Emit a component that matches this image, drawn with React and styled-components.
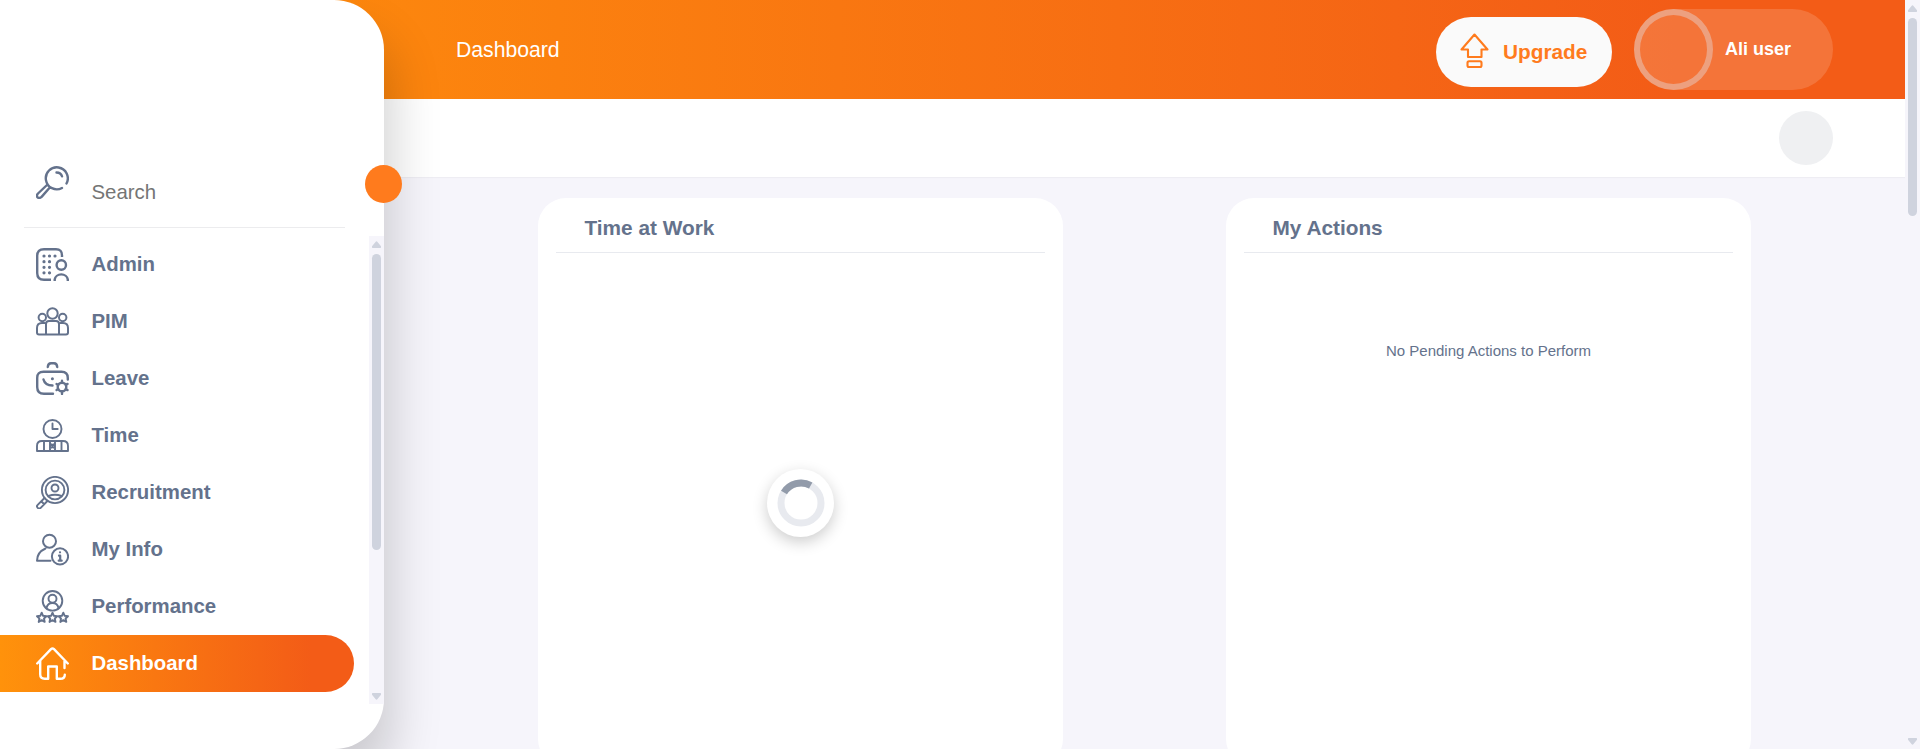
import React from 'react';
import styled, { createGlobalStyle } from 'styled-components';

const slate = '#64728c';
const orange = '#ff7b1d';
const brandGradient = 'linear-gradient(90deg, #ff920b, #f35c17 88%)';

const GlobalStyle = createGlobalStyle`
  * { box-sizing: border-box; }
  body { margin: 0; font-family: 'Liberation Sans', Arial, sans-serif; overflow: hidden; }
`;

const Page = styled.div`
  display: flex;
  height: 749px;
  overflow: hidden;
  background: #f6f5fb;
`;

const Sidebar = styled.aside`
  position: relative;
  z-index: 2;
  display: flex;
  flex-direction: column;
  flex: none;
  width: 384px;
  height: 749px;
  padding-top: 166px;
  background: #fff;
  border-radius: 0 50px 50px 0;
  box-shadow: 8px 34px 50px rgba(0, 0, 0, 0.18);
`;

const Toggle = styled.button`
  position: absolute;
  top: 165px;
  right: -18px;
  width: 37px;
  height: 38px;
  padding: 0;
  border: 0;
  border-radius: 50%;
  background: ${orange};
`;

const SearchRow = styled.label`
  display: flex;
  gap: 22.5px;
  flex: none;
  height: 62px;
  width: 321px;
  margin-left: 24px;
  padding-left: 12px;
  border-bottom: 1px solid #ececee;
  color: ${slate};
`;

const SearchText = styled.span`
  margin-top: 14px;
  font-size: 20.4px;
  line-height: 24px;
  color: #757575;
`;

const MenuArea = styled.div`
  display: flex;
  justify-content: space-between;
  margin-top: 8px;
  height: 468px;
`;

const Menu = styled.nav`
  width: 354px;
`;

const MenuItem = styled.a`
  display: flex;
  align-items: center;
  gap: 22.5px;
  height: 57px;
  padding: 0 0 0 36px;
  border-radius: 0 28.5px 28.5px 0;
  background: ${(p) => (p.$active ? brandGradient : 'transparent')};
  color: ${(p) => (p.$active ? '#fff' : slate)};
  font-size: 20.4px;
  line-height: 24px;
  font-weight: 700;
`;

const MenuLabel = styled.span`
  margin-top: -2px;
`;

const Icon = styled.svg`
  flex: none;
  width: 33px;
  height: 33px;
  fill: none;
  stroke: currentColor;
  stroke-width: ${(p) => p.$weight || 2.4};
  stroke-linecap: round;
  stroke-linejoin: round;
`;

const Track = styled.div`
  display: flex;
  flex-direction: column;
  align-items: center;
  flex: none;
  width: 15px;
  height: 100%;
  padding: 5px 0 4px;
  background: #f6f5fb;
`;

const Thumb = styled.div`
  width: 9px;
  height: ${(p) => p.$height}px;
  margin-top: 6px;
  margin-bottom: auto;
  border-radius: 5px;
  background: #cfd3de;
`;

const Arrow = styled.svg`
  display: block;
  width: 9px;
  height: 7px;
  fill: #cfd3de;
  transform: ${(p) => (p.$down ? 'rotate(180deg)' : 'none')};
`;

const Main = styled.main`
  flex: 1;
  min-width: 0;
`;

const TopBar = styled.header`
  display: flex;
  align-items: flex-start;
  height: 99px;
  margin-left: -384px;
  padding-left: 456px;
  padding-right: 72px;
  background: ${brandGradient};
  color: #fff;
`;

const PageTitle = styled.h1`
  margin: 38px auto 0 0;
  font-size: 21.2px;
  line-height: 24px;
  font-weight: 400;
`;

const Upgrade = styled.button`
  display: flex;
  align-items: center;
  gap: 13px;
  width: 176px;
  height: 70px;
  margin: 17px 22px 0 0;
  padding: 0 0 0 24px;
  border: 0;
  border-radius: 35px;
  background: #fafafa;
  color: ${orange};
  font: 700 20.8px/24px 'Liberation Sans', Arial, sans-serif;
`;

const UpgradeIcon = styled(Icon)`
  width: 30px;
  height: 36px;
  margin-top: -2px;
`;

const UserPill = styled.div`
  display: flex;
  align-items: center;
  gap: 12px;
  width: 199px;
  height: 81px;
  margin-top: 9px;
  border-radius: 40.5px;
  background: rgba(255, 255, 255, 0.15);
  font-size: 18px;
  line-height: 22px;
  font-weight: 700;
`;

const Avatar = styled.span`
  width: 79px;
  height: 81px;
  border: 6px solid rgba(228, 228, 232, 0.4);
  border-radius: 50%;
`;

const UserName = styled.span`
  margin-top: -2px;
`;

const SubBar = styled.div`
  display: flex;
  justify-content: flex-end;
  align-items: center;
  height: 78px;
  padding-right: 72px;
  background: #fff;
  box-shadow: 0 1px 1px rgba(0, 0, 0, 0.03);
`;

const HelpButton = styled.span`
  width: 54px;
  height: 54px;
  border-radius: 50%;
  background: #eff0f2;
`;

const Cards = styled.section`
  display: flex;
  gap: 163px;
  padding: 21px 0 0 154px;
`;

const Card = styled.article`
  flex: none;
  width: 525px;
  height: 569px;
  padding: 0 18px;
  border-radius: 28px;
  background: #fff;
`;

const CardTitle = styled.h2`
  height: 55px;
  margin: 0;
  padding: 18px 0 0 28.5px;
  border-bottom: 1px solid #e8eaef;
  color: ${slate};
  font-size: 20.8px;
  line-height: 24px;
  font-weight: 700;
`;

const Spinner = styled.div`
  display: grid;
  place-items: center;
  width: 67px;
  height: 68px;
  margin: 216px auto 0;
  border-radius: 50%;
  background: #fff;
  box-shadow: 0 5px 15px rgba(0, 0, 0, 0.2);
`;

const SpinnerRing = styled.svg`
  width: 48px;
  height: 48px;
  fill: none;
  stroke-width: 7;
`;

const Empty = styled.p`
  margin: 89px 0 0;
  text-align: center;
  color: ${slate};
  font-size: 15px;
  line-height: 18px;
`;

const Star = ({ x }) => (
  <path
    d="M0-4.7 1.4-1.6 4.7-1.2 2.3 1.1 3 4.5 0 2.8-3 4.5-2.3 1.1-4.7-1.2-1.4-1.6Z"
    transform={`translate(${x} 27.4)`}
  />
);

const items = [
  {
    label: 'Admin',
    art: (
      <>
        <path strokeLinecap="butt" d="M26 9V7.500q0-6.300-6-6.300H8Q1.200 1.200 1.200 8v17q0 6.800 6.800 6.800h7" />
        <circle cx="25.300" cy="17" r="4.700" />
        <path strokeLinecap="butt" d="M18.700 33v-1.500a6.600 5.800 0 0 1 13.100 0V33" />
        <path
          strokeWidth="3.200"
          d="M8 8h.01M13.500 8h.01M19 8h.01M8 13.700h.01M13.500 13.700h.01M8 19.300h.01M13.500 19.300h.01M8 24.800h.01M13.500 24.800h.01"
        />
      </>
    ),
  },
  {
    label: 'PIM',
    weight: 2,
    art: (
      <>
        <circle cx="16.500" cy="8.500" r="5.200" />
        <circle cx="6.300" cy="12.500" r="3.700" />
        <circle cx="26.700" cy="12.500" r="3.700" />
        <path d="M10 29.500V19q0-3 3-3h7q3 0 3 3v10.500M8.500 18H6q-5 0-5 5v4.500q0 2 2 2h27q2 0 2-2V23q0-5-5-5h-2.500" />
      </>
    ),
  },
  {
    label: 'Leave',
    art: (
      <>
        <path d="M11.800 5q.2-3.800 3.200-3.800h3q3 0 3.200 3.800M31.800 17.500V16q0-6.300-6.300-6.300h-18Q1.200 9.700 1.200 16v9q0 6.800 6.800 6.800h9" />
        <path d="M7.500 17.500q1.500 6 9 6" />
        <path strokeWidth="3" d="M16.400 16.700h.01" />
        <circle cx="26" cy="25" r="4.300" />
        <path d="M26 18.700v2M26 29.500v2.500M20.600 21.900l1.600 1M29.800 27.100l1.700 1M31.500 21.900l-1.700 1M22.200 27.100l-1.600 1" />
      </>
    ),
  },
  {
    label: 'Time',
    weight: 1.9,
    art: (
      <>
        <circle cx="16.500" cy="10" r="9" />
        <path d="M16.500 4.500V10h5.200M1 32v-5q0-5 5-5h21q5 0 5 5v5ZM8 22v10M14 22v10M19 22v10M25.500 22v10M14 25l2.500 1 2.500-1M14 29l2.500-1 2.500 1" />
      </>
    ),
  },
  {
    label: 'Recruitment',
    weight: 1.9,
    art: (
      <>
        <circle cx="19" cy="14" r="13.100" />
        <circle cx="19" cy="14" r="9.400" />
        <circle cx="19" cy="12" r="3.500" />
        <path d="M12.500 20q6.500-2.500 13 0M8.500 22 1.700 28.800q-1.500 1.500 0 3t3 0L11.400 25M5.500 25.500l2.500 2.500" />
      </>
    ),
  },
  {
    label: 'My Info',
    weight: 2,
    art: (
      <>
        <circle cx="13.500" cy="8.200" r="6.500" />
        <path d="M14.500 27.800H1q0-8.500 8.500-12.300" />
        <circle cx="24" cy="23.400" r="8.100" />
        <path strokeWidth="2.200" d="M24 19.300h.01M23 22.700h1.200v4.800M22.700 27.700h3" />
      </>
    ),
  },
  {
    label: 'Performance',
    weight: 1.9,
    art: (
      <>
        <circle cx="16.500" cy="10.800" r="9.800" />
        <circle cx="16.500" cy="8.800" r="4" />
        <path d="M10.500 18q1-5 6-5t6 5" />
        <Star x={5.700} />
        <Star x={16.500} />
        <Star x={27.300} />
      </>
    ),
  },
  {
    label: 'Dashboard',
    active: true,
    art: <path d="M1.200 16.500 15 2.200q1.500-1.500 3 0L31.800 16.500M28.500 14v7M4.200 14v13.300q0 4.500 4.500 4.500h3.500V19.500h8.600v12.300h3.500q4.500 0 4.500-4" />,
  },
];

function ScrollBar({ thumb }) {
  return (
    <Track>
      <Arrow viewBox="0 0 9 7"><path d="M3.500 1q1-1.500 2 0L9 5.200V6.500L8.500 7h-8L0 6.500V5.200Z" /></Arrow>
      <Thumb $height={thumb} />
      <Arrow $down viewBox="0 0 9 7"><path d="M3.500 1q1-1.500 2 0L9 5.200V6.500L8.500 7h-8L0 6.500V5.200Z" /></Arrow>
    </Track>
  );
}

export default function App() {
  return (
    <>
      <GlobalStyle />
      <Page>
        <Sidebar>
          <SearchRow>
            <Icon viewBox="0 0 33 33">
              <path d="M30.500 17.500A11 11 0 1 0 26 22M20.500 6.500q4.500 0 5.500 3.800M11.500 18.500 2 27.500q-2 2.300-.4 3.800t4-.4L14 21.300" />
            </Icon>
            <SearchText>Search</SearchText>
          </SearchRow>
          <MenuArea>
            <Menu>
              {items.map((item) => (
                <MenuItem key={item.label} $active={item.active}>
                  <Icon viewBox="0 0 33 33" $weight={item.weight}>{item.art}</Icon>
                  <MenuLabel>{item.label}</MenuLabel>
                </MenuItem>
              ))}
            </Menu>
            <ScrollBar thumb={296} />
          </MenuArea>
          <Toggle aria-label="Collapse menu" />
        </Sidebar>
        <Main>
          <TopBar>
            <PageTitle>Dashboard</PageTitle>
            <Upgrade>
              <UpgradeIcon $weight={2.1} viewBox="0 0 30 36">
                <path d="M14.500 1.500 27.500 16.500H21.500V24H8v-7.500H1.500ZM9 28.300h11q1.500 0 1.500 1.500v2.700q0 1.500-1.500 1.500H9Q7.500 34 7.500 32.500v-2.700Q7.500 28.300 9 28.300Z" />
              </UpgradeIcon>
              Upgrade
            </Upgrade>
            <UserPill>
              <Avatar />
              <UserName>Ali user</UserName>
            </UserPill>
          </TopBar>
          <SubBar><HelpButton /></SubBar>
          <Cards>
            <Card>
              <CardTitle>Time at Work</CardTitle>
              <Spinner>
                <SpinnerRing viewBox="0 0 48 48">
                  <circle cx="24" cy="24" r="20" stroke="#e8eaef" />
                  <path d="M7 13.500A20 20 0 0 1 33.700 6.500" stroke="#929baa" />
                </SpinnerRing>
              </Spinner>
            </Card>
            <Card>
              <CardTitle>My Actions</CardTitle>
              <Empty>No Pending Actions to Perform</Empty>
            </Card>
          </Cards>
        </Main>
        <ScrollBar thumb={198} />
      </Page>
    </>
  );
}
